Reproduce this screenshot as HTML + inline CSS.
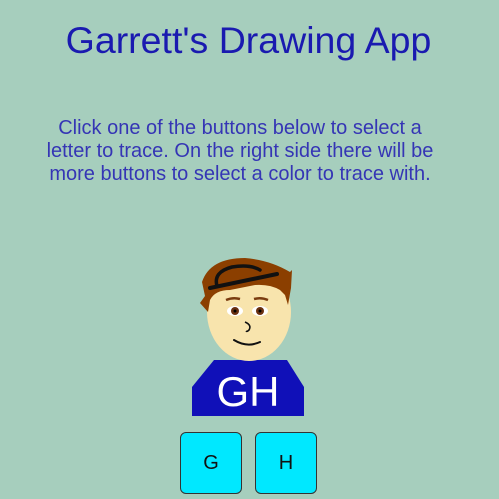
<!DOCTYPE html>
<html><head><style>
body{margin:0;width:499px;height:499px;background:#a6cebd;font-family:"Liberation Sans",Arial,sans-serif;position:relative;overflow:hidden}
h1{position:absolute;top:18px;left:0;width:497px;margin:0;text-align:center;font-weight:normal;font-size:37.5px;color:#1a1ab0;line-height:44px}
p{position:absolute;top:117px;left:30px;width:420px;margin:0;text-align:center;font-size:20px;line-height:23px;color:#3535b5}
.b{position:absolute;top:432px;width:62px;height:62px;background:#00e8ff;border:1.5px solid #333;border-radius:6px;font-size:20px;line-height:60px;text-align:center;color:#111;box-sizing:border-box}
</style></head><body>
<h1>Garrett's Drawing App</h1>
<p>Click one of the buttons below to select a<br>letter to trace. On the right side there will be<br>more buttons to select a color to trace with.</p>
<svg style="position:absolute;left:0;top:0" width="499" height="499">
<polygon points="214,360 287,360 304,387 304,416 192,416 192,387" fill="#1010b8"/>
<text x="248" y="406" text-anchor="middle" font-family="Liberation Sans,sans-serif" font-size="42" fill="#fff">GH</text>
<ellipse cx="249" cy="312" rx="42" ry="49" fill="#f8e4ad"/>
<path d="M200,303 L205,296 L202,282 Q210,258 245,258 Q270,260 290,272 L292,270 L291,288 L288,305 L285,295 L280,290 Q270,284 255,285 L230,290 Q215,290 210,300 L208,312 Z" fill="#8b3f00"/>
<path d="M217,286 Q213,272 232,267 Q250,264 260,270" fill="none" stroke="#111" stroke-width="3.5" stroke-linecap="round"/>
<path d="M210,288 L277,274" stroke="#111" stroke-width="4" stroke-linecap="round"/>
<path d="M226,300 Q233,297 240,299 M254,299 Q261,297 268,300" stroke="#7a3c10" stroke-width="2.5" fill="none"/>
<ellipse cx="235" cy="311" rx="8" ry="5" fill="#fff"/><circle cx="235" cy="311" r="4" fill="#6a3010"/><circle cx="235" cy="311" r="1.5" fill="#000"/>
<ellipse cx="260" cy="311" rx="8" ry="5" fill="#fff"/><circle cx="260" cy="311" r="4" fill="#6a3010"/><circle cx="260" cy="311" r="1.5" fill="#000"/>
<path d="M245,322 Q252,325 249,330 Q247,332 246,331" fill="none" stroke="#111" stroke-width="1.6"/>
<path d="M234,340 Q247,348 260,342" fill="none" stroke="#111" stroke-width="2" stroke-linecap="round"/>
</svg>
<div class="b" style="left:180px">G</div>
<div class="b" style="left:255px">H</div>
</body></html>
